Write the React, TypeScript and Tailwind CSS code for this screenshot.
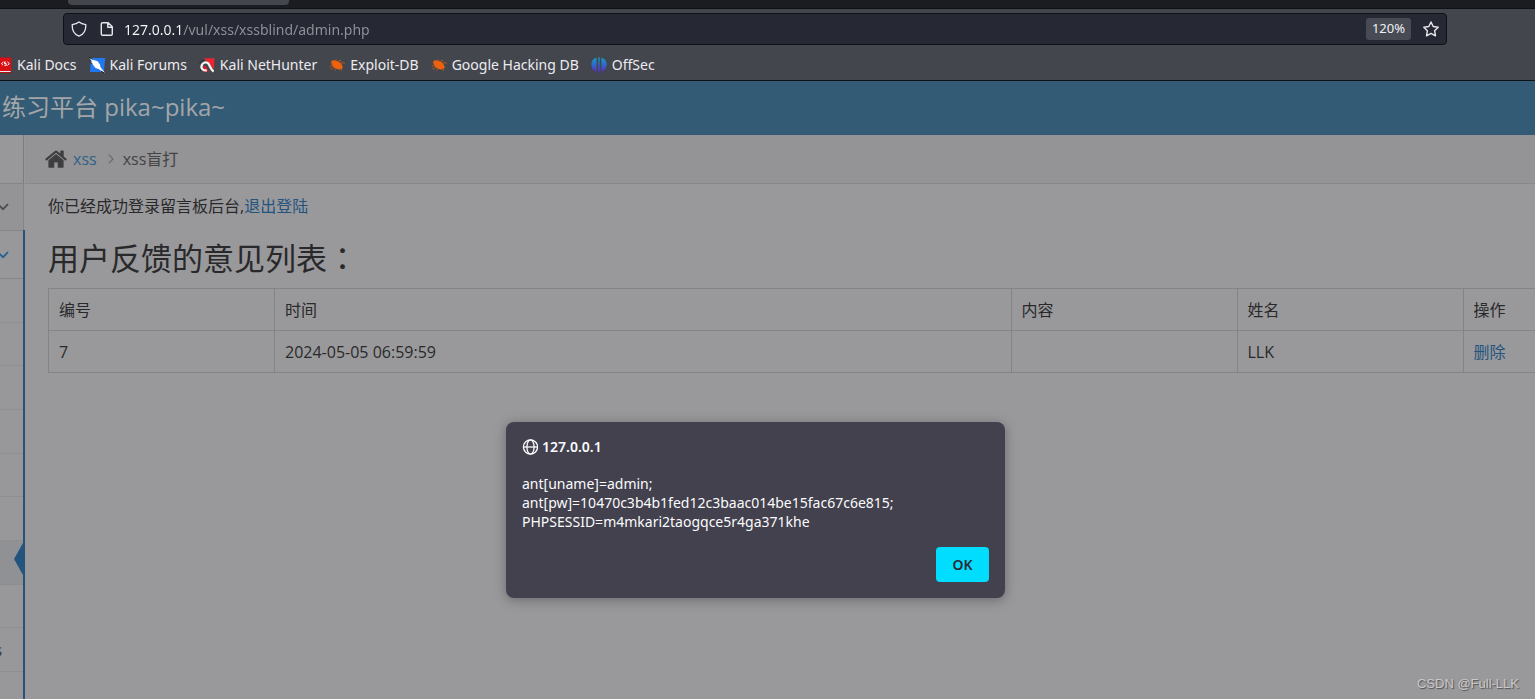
import React from "react";

const SHELL_FONT = "font-['Noto_Sans','Noto_Sans_CJK_SC',sans-serif]";
const PAGE_FONT = "font-['Open_Sans','Noto_Sans_CJK_SC',sans-serif]";

function ShieldIcon() {
  return (
    <svg viewBox="0 0 16 16" className="size-4" fill="none" stroke="#e8e8ec" strokeWidth="1.3" strokeLinejoin="round" aria-hidden="true">
      <path d="M8 .9 C6.2 2.3 3.6 3.2 1.2 3.7 C1 9 3.2 13.3 8 15.2 C12.8 13.3 15 9 14.8 3.7 C12.4 3.2 9.8 2.3 8 .9 Z" />
    </svg>
  );
}

function PageIcon() {
  return (
    <svg viewBox="0 0 16 16" className="size-4" fill="none" stroke="#e8e8ec" strokeWidth="1.4" strokeLinejoin="round" aria-hidden="true">
      <path d="M3.6 1.7 H9.2 L13.3 5.8 V13 a1.3 1.3 0 0 1 -1.3 1.3 H3.6 a1.3 1.3 0 0 1 -1.3 -1.3 V3 a1.3 1.3 0 0 1 1.3 -1.3 Z M8.8 1.9 V6.2 H13" />
    </svg>
  );
}

function StarIcon() {
  return (
    <svg viewBox="0 0 16 16" className="size-4" fill="none" stroke="#e8e8ec" strokeWidth="1.4" strokeLinejoin="round" aria-hidden="true">
      <path d="M8 1 L10.2 5.5 L15.2 6.2 L11.6 9.7 L12.5 14.8 L8 12.4 L3.5 14.8 L4.4 9.7 L.8 6.2 L5.8 5.5 Z" />
    </svg>
  );
}

function DocsIcon() {
  return (
    <svg viewBox="0 0 16 16" className="size-4" aria-hidden="true">
      <path d="M1 .5 H15.2 V14 H1 Z" fill="#d90f14" />
      <path d="M1 14 H15.2 V16 H1 Z" fill="#b90c11" />
      <path d="M1 14 H14.6 V15 H1 Z" fill="#eceaea" />
      <path d="M7.4 5 L5.4 6.6 L7 8.2 M9.8 5 H8.4 V6.6 H10.2 V8.4 H8.4 M11.4 4.8 L13.4 6.6 L11.4 8.4" fill="none" stroke="#fff" strokeWidth="1" />
    </svg>
  );
}

function ForumsIcon() {
  return (
    <svg viewBox="0 0 16 16" className="size-4" aria-hidden="true">
      <path d="M2 1 H16.2 L14.8 15 H1 Z" fill="#2277f2" />
      <path d="M0 .4 L4.6 3 L8.6 4.2 L11 7.6 L11.4 10 L15.8 15.8 L13.2 14.8 L9.8 12 L6.4 11 L4.2 8 L1.2 4.4 L3.4 4.8 Z" fill="#fff" />
      <path d="M0 .2 L3.6 2.4 M.6 4 L3.4 7.2 M12 14 L15 15.8" fill="none" stroke="#20242c" strokeWidth="1" />
    </svg>
  );
}

function NetHunterIcon() {
  return (
    <svg viewBox="0 0 16 16" className="size-4" aria-hidden="true">
      <path d="M4.4 1.2 H15.5 L14.8 12.6 L9 5 Z" fill="#ef2430" />
      <path d="M4.4 9.4 L6.4 8.6 L10 14.8 H4 Z" fill="#d51f2a" />
      <path d="M7.8 13.4 C3.8 13.8 1.8 11.4 2.6 8.6 C3.6 5.4 7.4 4.2 9.4 6.6 C11 8.8 11.4 12 14.6 14.6" fill="none" stroke="#f7f4f4" strokeWidth="2.3" />
      <path d="M.8 6.6 C1.8 4.4 3.4 3.4 5.2 3.2 M1 12 L2.4 14.2" fill="none" stroke="#24242b" strokeWidth="1" />
    </svg>
  );
}

function ExploitIcon() {
  return (
    <svg viewBox="0 0 16 16" className="size-4" aria-hidden="true">
      <path d="M2.4 4 C4.4 2.6 6.2 3.6 8 4.1 C10.8 4.7 12.4 6.6 13 8.2 C14.3 9.8 13.6 12 12.4 11.8 C10.7 13 7.6 12.4 5.6 10.7 C3.7 9.8 1.8 6.6 2.4 4 Z" fill="#ee620d" />
      <path d="M6 4.4 L7.4 2.4 M9 5 L11 3.2 L12.4 3.8 M11 6.4 L14.2 5.7 L15.8 6.5 M3.4 8.3 L.8 9.4 M5 10 L2.6 12 L1.4 11.6 M7 11.3 L5.5 13.6 M11.7 11 L12.6 13.8" fill="none" stroke="#c2571a" strokeWidth=".9" />
    </svg>
  );
}

function OffSecIcon() {
  return (
    <svg viewBox="0 0 16 16" className="size-4" aria-hidden="true">
      <defs>
        <linearGradient id="offsec" x1="0" y1="0" x2="0" y2="1" gradientUnits="objectBoundingBox">
          <stop offset="0" stopColor="#149fbd" />
          <stop offset=".5" stopColor="#2f68cf" />
          <stop offset="1" stopColor="#6424c6" />
        </linearGradient>
      </defs>
      <path d="M5.6 .8 V14 C5.3 15 5 15 4.4 14.2 C-.9 11.2 -.9 3.8 4 1.3 Z M7.3 .3 H8.7 V15.7 H7.3 Z M10.4 .8 L12 1.3 C16.9 3.8 16.9 11.2 11.6 14.2 C11 15 10.7 15 10.4 14 Z" fill="url(#offsec)" />
    </svg>
  );
}

function HomeIcon() {
  return (
    <svg viewBox="0 0 22 18" className="h-[18px] w-[22px]" fill="#3e3e40" aria-hidden="true">
      <path d="M11 3.9 L3.4 10.2 V17 a.8 .8 0 0 0 .8 .8 H9.2 V12.4 H12.8 V17.8 H17.8 a.8 .8 0 0 0 .8 -.8 V10.2 Z" />
      <path d="M.4 8.8 L9.9 .9 Q11 .1 12.1 .9 L15.3 3.6 V1 a.5 .5 0 0 1 .5 -.5 H18.2 a.5 .5 0 0 1 .5 .5 V6.4 L21.6 8.8 Q22 9.2 21.6 9.6 L20.9 10.4 Q20.5 10.7 20.1 10.4 L11 2.8 L1.9 10.4 Q1.5 10.7 1.1 10.4 L.4 9.6 Q0 9.2 .4 8.8 Z" />
    </svg>
  );
}

function Globe() {
  return (
    <svg viewBox="0 0 16 16" className="size-4" fill="none" stroke="#fbfbfe" strokeWidth="1.3" aria-hidden="true">
      <circle cx="8.5" cy="8" r="7.1" />
      <ellipse cx="8.5" cy="8" rx="3.6" ry="7.1" />
      <path d="M1.5 8 H15.5" />
    </svg>
  );
}

function Chevron() {
  return (
    <svg viewBox="0 0 12 8" className="h-2 w-3 shrink-0" fill="none" stroke="currentColor" strokeWidth="1.7" aria-hidden="true">
      <path d="M1 1.2 L6 6.2 L11 1.2" />
    </svg>
  );
}

const bookmarks = [
  { label: "Kali Docs", icon: <DocsIcon /> },
  { label: "Kali Forums", icon: <ForumsIcon /> },
  { label: "Kali NetHunter", icon: <NetHunterIcon /> },
  { label: "Exploit-DB", icon: <ExploitIcon /> },
  { label: "Google Hacking DB", icon: <ExploitIcon /> },
  { label: "OffSec", icon: <OffSecIcon /> },
];

function BrowserChrome() {
  return (
    <div className="shrink-0 border-b border-[#101116] bg-[#43464d]">
      <div className="h-[9px] border-b border-[#101116] bg-[#1b1c22] pl-[68px]">
        <div className="h-[5px] w-[221px] rounded-b bg-[#43464d]" />
      </div>
      <div className="pt-1 pr-[88px] pl-[63px]">
        <div className="flex h-8 items-center rounded border border-[#101116] bg-[#262833] pr-[7px] pl-[7px]">
          <button type="button" aria-label="Tracking protection"><ShieldIcon /></button>
          <button type="button" aria-label="Site information" className="ml-3"><PageIcon /></button>
          <input
            aria-label="Address"
            defaultValue="127.0.0.1/vul/xss/xssblind/admin.php"
            className="ml-[9px] h-full min-w-0 flex-1 bg-[linear-gradient(90deg,#fbfbfe_58px,#91929a_58px)] bg-clip-text pt-px text-[14px] leading-6 text-transparent outline-none"
          />
          <button type="button" className="h-[22px] rounded-[3px] bg-[#484b54] px-[6px] text-[13px] text-[#f0f0f4]">120%</button>
          <button type="button" aria-label="Bookmark this page" className="ml-3"><StarIcon /></button>
        </div>
      </div>
      <nav className="-ml-1 flex h-[35px] items-center gap-3 pt-1 text-[14px] text-[#ececf0]">
        {bookmarks.map((b) => (
          <a key={b.label} href="#" className="flex items-center gap-[5px] whitespace-nowrap">
            {b.icon}
            {b.label}
          </a>
        ))}
      </nav>
    </div>
  );
}

const subItems = ["", "", "", "", "", "", "active", "", "s"];

function Sidebar() {
  return (
    <aside className="flex w-[25px] shrink-0 flex-col overflow-hidden bg-[#98989a]">
      <div className="mr-px h-12 border-r border-[#7d7d7f]" />
      <div className="mr-px flex h-[47px] items-center justify-end border-t border-r border-[#858587] bg-[#949496] pr-[14px] text-[#4c4c4e]">
        <Chevron />
      </div>
      <div className="flex flex-1 flex-col border-r-2 border-[#24547e]">
        <div className="flex h-12 shrink-0 items-center justify-end border-t border-[#858587] pr-[14px] text-[#24608f]">
          <Chevron />
        </div>
        <ul className="border-t border-[#858587]">
          {subItems.map((item, i) =>
            item === "active" ? (
              <li key={i} className="flex h-[44px] items-center justify-end border-b border-dotted border-[#88888a] bg-[#8f9194]">
                <svg viewBox="0 0 9 32" className="mb-2 h-8 w-[9px]" fill="#24547e" aria-hidden="true">
                  <path d="M9 0 V32 L0 16 Z" />
                </svg>
              </li>
            ) : (
              <li key={i} className="flex h-[44px] items-center justify-end overflow-hidden border-b border-dotted border-[#88888a] pr-[21px] text-[16px] text-[#3b3b3d] nth-[3n+2]:h-[43px]">
                {item}
              </li>
            ),
          )}
        </ul>
      </div>
    </aside>
  );
}

function FeedbackTable() {
  const cell = "border border-r-0 border-[#848486] px-[10px] text-left font-normal";
  return (
    <table className="w-full table-fixed border-collapse text-[#29292b]">
      <colgroup>
        <col className="w-[226px]" />
        <col />
        <col className="w-[226px]" />
        <col className="w-[226px]" />
        <col className="w-[72px]" />
      </colgroup>
      <thead>
        <tr className="h-[42px]">
          <th scope="col" className={cell}>编号</th>
          <th scope="col" className={cell}>时间</th>
          <th scope="col" className={cell}>内容</th>
          <th scope="col" className={cell}>姓名</th>
          <th scope="col" className={cell}>操作</th>
        </tr>
      </thead>
      <tbody>
        <tr className="h-[42px]">
          <td className={cell}>7</td>
          <td className={cell}>2024-05-05 06:59:59</td>
          <td className={cell} />
          <td className={cell}>LLK</td>
          <td className={cell}>
            <a href="#" className="text-[#24547e]">删除</a>
          </td>
        </tr>
      </tbody>
    </table>
  );
}

function AlertDialog() {
  return (
    <div className="absolute inset-x-0 top-[422px] flex justify-center pr-6">
      <div
        role="alertdialog"
        aria-labelledby="alert-title"
        aria-describedby="alert-text"
        className={`w-[499px] rounded-lg bg-[#42414d] p-4 text-[#fbfbfe] shadow-[0_2px_12px_rgba(20,20,30,0.35)] ${SHELL_FONT}`}
      >
        <div className="flex h-[18px] items-center gap-1">
          <Globe />
          <h2 id="alert-title" className="text-[14px] leading-[18px] font-semibold">127.0.0.1</h2>
        </div>
        <p id="alert-text" className="mt-[18px] text-[14px] leading-[19px]">
          ant[uname]=admin;
          <br />
          ant[pw]=10470c3b4b1fed12c3baac014be15fac67c6e815;
          <br />
          PHPSESSID=m4mkari2taogqce5r4ga371khe
        </p>
        <div className="mt-4 flex justify-end">
          <button type="button" className="h-[35px] w-[53px] rounded bg-[#00ddff] text-[14px] font-semibold text-[#2b2a33]">OK</button>
        </div>
      </div>
    </div>
  );
}

export default function App() {
  return (
    <div className={`relative flex min-h-screen flex-col overflow-hidden bg-[#99999b] ${SHELL_FONT}`}>
      <BrowserChrome />
      <div className={`flex flex-1 flex-col ${PAGE_FONT}`}>
        <header className="flex h-[54px] shrink-0 items-center bg-[#335b75] pb-[2px] pl-[2px] text-[24px] leading-9 text-[#a3a6a9]">
          练习平台 pika~pika~
        </header>
        <div className="flex flex-1 text-[16px] leading-6">
          <Sidebar />
          <main className="min-w-0 flex-1">
            <nav aria-label="Breadcrumb" className="flex h-[49px] items-center border-b border-[#88888a] bg-[#949395] pl-5 text-[#434345]">
              <HomeIcon />
              <a href="#" className="ml-[6px] text-[#2f6288]">xss</a>
              <svg viewBox="0 0 6 10" className="mr-[9px] ml-[11px] h-[10px] w-[6px]" fill="none" stroke="#6c6c70" strokeWidth="1.3" aria-hidden="true">
                <path d="M.8 .6 L5 5 L.8 9.4" />
              </svg>
              <span>xss盲打</span>
            </nav>
            <div className="pl-[23px] text-[#29292b]">
              <p className="pt-[10px]">
                你已经成功登录留言板后台,<a href="#" className="text-[#24547e]">退出登陆</a>
              </p>
              <h1 className="mt-4 mb-[7px] text-[31px] leading-[45px]">
                用户反馈的意见列表<span lang="zh-TW" className="font-['Noto_Sans_CJK_TC',sans-serif]">：</span>
              </h1>
              <FeedbackTable />
            </div>
          </main>
        </div>
      </div>
      <AlertDialog />
      <div className="absolute right-4 bottom-[7px] font-['Liberation_Sans',sans-serif] text-[13px] leading-4 text-[#c9c9cb] [text-shadow:1px_1px_1px_#505052]">
        CSDN @Full-LLK
      </div>
    </div>
  );
}
